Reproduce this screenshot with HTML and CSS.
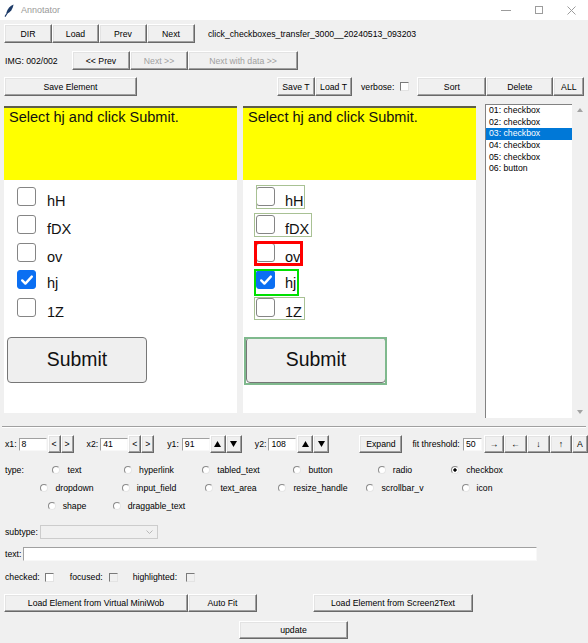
FILE: index.html
```html
<!DOCTYPE html>
<html>
<head>
<meta charset="utf-8">
<title>Annotator</title>
<link rel="stylesheet" href="styles.css">
</head>
<body>
<div class="window">
  <div class="titlebar">
    <svg class="app-icon" width="10" height="13" viewBox="0 0 10 13">
      <path d="M9.6 0.4 C6.2 1.6 3.4 4.6 2.4 8.6 L3.2 9.4 C6.6 8.2 8.8 4.8 9.6 0.4 Z" fill="#1d3b68"/>
      <path d="M5.5 5.5 L1 12.6" stroke="#1d3b68" stroke-width="1.1"/>
    </svg>
    <span class="title">Annotator</span>
    <div class="win-controls">
      <span class="wc"><svg width="10" height="1"><rect width="10" height="1" fill="#9c9c9c"/></svg></span>
      <span class="wc"><svg width="8" height="8"><rect x="0.5" y="0.5" width="7" height="7" fill="none" stroke="#9c9c9c"/></svg></span>
      <span class="wc"><svg width="9" height="9"><path d="M0.5 0.5 L8.5 8.5 M8.5 0.5 L0.5 8.5" stroke="#9c9c9c"/></svg></span>
    </div>
  </div>

  <div class="row r1">
    <div class="btn w48">DIR</div>
    <div class="btn w47">Load</div>
    <div class="btn w48">Prev</div>
    <div class="btn w48">Next</div>
    <span class="lbl filename">click_checkboxes_transfer_3000__20240513_093203</span>
  </div>

  <div class="row r2">
    <span class="lbl img-count">IMG: 002/002</span>
    <div class="btn w58">&lt;&lt; Prev</div>
    <div class="btn w58 disabled">Next &gt;&gt;</div>
    <div class="btn w110 disabled">Next with data &gt;&gt;</div>
  </div>

  <div class="row r3">
    <div class="btn save-el">Save Element</div>
    <div class="btn w38 save-t">Save T</div>
    <div class="btn w37">Load T</div>
    <span class="lbl verbose">verbose:</span>
    <span class="tkcb verbose-cb"></span>
    <div class="btn w69 sort">Sort</div>
    <div class="btn w67">Delete</div>
    <div class="btn w31">ALL</div>
  </div>

  <div class="panels">
    <div class="mw">
      <div class="query">Select hj and click Submit.</div>
      <div class="mw-list">
        <div class="mw-row"><span class="mw-cb"></span><span class="mw-label">hH</span></div>
        <div class="mw-row"><span class="mw-cb"></span><span class="mw-label">fDX</span></div>
        <div class="mw-row"><span class="mw-cb"></span><span class="mw-label">ov</span></div>
        <div class="mw-row"><span class="mw-cb checked"><svg width="16" height="16" viewBox="0 0 16 16"><path d="M3.2 8.4 L6.4 11.6 L12.8 4.6" fill="none" stroke="#fff" stroke-width="2.4" stroke-linecap="round" stroke-linejoin="round"/></svg></span><span class="mw-label">hj</span></div>
        <div class="mw-row"><span class="mw-cb"></span><span class="mw-label">1Z</span></div>
      </div>
      <div class="mw-submit">Submit</div>
    </div>

    <div class="mw mid">
      <div class="query">Select hj and click Submit.</div>
      <div class="mw-list">
        <div class="mw-row"><span class="mw-cb"></span><span class="mw-label">hH</span></div>
        <div class="mw-row"><span class="mw-cb"></span><span class="mw-label">fDX</span></div>
        <div class="mw-row"><span class="mw-cb"></span><span class="mw-label">ov</span></div>
        <div class="mw-row"><span class="mw-cb checked"><svg width="16" height="16" viewBox="0 0 16 16"><path d="M3.2 8.4 L6.4 11.6 L12.8 4.6" fill="none" stroke="#fff" stroke-width="2.4" stroke-linecap="round" stroke-linejoin="round"/></svg></span><span class="mw-label">hj</span></div>
        <div class="mw-row"><span class="mw-cb"></span><span class="mw-label">1Z</span></div>
      </div>
      <div class="mw-submit">Submit</div>
      <div class="ann ann-hh"></div>
      <div class="ann ann-fdx"></div>
      <div class="ann ann-ov"></div>
      <div class="ann ann-hj"></div>
      <div class="ann ann-1z"></div>
      <div class="ann ann-submit"></div>
    </div>

    <div class="listwrap">
      <div class="listbox">
        <div class="li">01: checkbox</div>
        <div class="li">02: checkbox</div>
        <div class="li sel">03: checkbox</div>
        <div class="li">04: checkbox</div>
        <div class="li">05: checkbox</div>
        <div class="li">06: button</div>
      </div>
      <div class="vscroll">
        <span class="arrow-up"></span>
        <span class="arrow-down"></span>
      </div>
    </div>
  </div>

  <div class="separator"></div>

  <div class="row xrow">
    <span class="lbl coord-lbl first">x1:</span>
    <span class="entry coord">8</span>
    <div class="btn small w13 after-entry">&lt;</div>
    <div class="btn small w13">&gt;</div>
    <span class="lbl coord-lbl">x2:</span>
    <span class="entry coord">41</span>
    <div class="btn small w13">&lt;</div>
    <div class="btn small w13">&gt;</div>
    <span class="lbl coord-lbl y1">y1:</span>
    <span class="entry coord">91</span>
    <div class="btn small w16"><svg width="7" height="6"><path d="M3.5 0 L7 6 L0 6 Z" fill="#000"/></svg></div>
    <div class="btn small w16"><svg width="7" height="6"><path d="M0 0 L7 0 L3.5 6 Z" fill="#000"/></svg></div>
    <span class="lbl coord-lbl">y2:</span>
    <span class="entry coord">108</span>
    <div class="btn small w16 after-entry"><svg width="7" height="6"><path d="M3.5 0 L7 6 L0 6 Z" fill="#000"/></svg></div>
    <div class="btn small w16"><svg width="7" height="6"><path d="M0 0 L7 0 L3.5 6 Z" fill="#000"/></svg></div>
    <div class="btn small expand">Expand</div>
    <span class="lbl fit-lbl">fit threshold:</span>
    <span class="entry fit">50</span>
    <div class="btn small w20 fit-first">→</div>
    <div class="btn small w23">←</div>
    <div class="btn small w23">↓</div>
    <div class="btn small w22">↑</div>
    <div class="btn small w16">A</div>
  </div>

  <div class="types">
    <span class="lbl type-lbl">type:</span>
    <span class="opt"><span class="radio"></span>text</span>
    <span class="opt"><span class="radio"></span>hyperlink</span>
    <span class="opt"><span class="radio"></span>tabled_text</span>
    <span class="opt"><span class="radio"></span>button</span>
    <span class="opt"><span class="radio"></span>radio</span>
    <span class="opt"><span class="radio on"></span>checkbox</span>

    <span></span>
    <span class="opt"><span class="radio"></span>dropdown</span>
    <span class="opt"><span class="radio"></span>input_field</span>
    <span class="opt"><span class="radio"></span>text_area</span>
    <span class="opt"><span class="radio"></span>resize_handle</span>
    <span class="opt"><span class="radio"></span>scrollbar_v</span>
    <span class="opt"><span class="radio"></span>icon</span>

    <span></span>
    <span class="opt"><span class="radio"></span>shape</span>
    <span class="opt"><span class="radio"></span>draggable_text</span>
  </div>

  <div class="row subrow">
    <span class="lbl sub-lbl">subtype:</span>
    <span class="combo"><svg width="7" height="4" viewBox="0 0 7 4"><path d="M0.5 0.5 L3.5 3.5 L6.5 0.5" fill="none" stroke="#b8b8b8"/></svg></span>
  </div>

  <div class="row textrow">
    <span class="lbl text-lbl">text:</span>
    <span class="entry text-entry"></span>
  </div>

  <div class="row flagrow">
    <span class="lbl flag-first">checked:</span>
    <span class="tkcb cb-checked"></span>
    <span class="lbl flag-focused">focused:</span>
    <span class="tkcb disabled cb-focused"></span>
    <span class="lbl flag-high">highlighted:</span>
    <span class="tkcb disabled cb-high"></span>
  </div>

  <div class="row loadrow">
    <div class="btn load-mw">Load Element from Virtual MiniWob</div>
    <div class="btn w69">Auto Fit</div>
    <div class="btn load-s2t">Load Element from Screen2Text</div>
  </div>

  <div class="row updaterow">
    <div class="btn update">update</div>
  </div>
</div>
</body>
</html>
```
FILE: styles.css
```css
* { box-sizing: border-box; }
html, body { margin: 0; padding: 0; }
body {
  background: #f0f0f0;
  font-family: "Liberation Sans", Arial, sans-serif;
  font-size: 8.7px;
  color: #000;
}
.window {
  width: 588px;
  height: 643px;
  overflow: hidden;
  background: #f0f0f0;
}

/* title bar */
.titlebar {
  height: 20px;
  background: #fff;
  display: flex;
  align-items: center;
}
.app-icon { margin-left: 4px; }
.title { margin-left: 7px; color: #9a9a9a; font-size: 9px; }
.win-controls { margin-left: auto; display: flex; height: 20px; }
.wc { width: 33px; display: flex; align-items: center; justify-content: center; }

/* generic rows */
.row { display: flex; align-items: center; }
.lbl { white-space: nowrap; }

.btn {
  display: flex;
  align-items: center;
  justify-content: center;
  height: 19px;
  background: #f0f0f0;
  border: 1px solid;
  border-color: #fff #696969 #696969 #fff;
  box-shadow: inset -1px -1px 0 #a0a0a0, inset 1px 1px 0 #e3e3e3;
  white-space: nowrap;
  overflow: hidden;
  flex: none;
}
.btn.small { height: 18px; }
.btn.disabled { color: #a0a0a0; }
.w13 { width: 13px; }
.w16 { width: 16px; }
.w20 { width: 20px; }
.w22 { width: 22px; }
.w23 { width: 23px; }
.w31 { width: 31px; }
.w37 { width: 37px; }
.w38 { width: 38px; }
.w47 { width: 47px; }
.w48 { width: 48px; }
.w58 { width: 58px; }
.w67 { width: 67px; }
.w69 { width: 69px; }
.w110 { width: 110px; }

.entry {
  display: flex;
  align-items: center;
  height: 13px;
  background: #fff;
  border: 1px solid;
  border-color: #a0a0a0 #f8f8f8 #f8f8f8 #a0a0a0;
  padding-left: 2px;
  flex: none;
}

.tkcb {
  width: 9px;
  height: 9px;
  background: #fff;
  border: 1px solid;
  border-color: #7a7a7a #e3e3e3 #e3e3e3 #7a7a7a;
  flex: none;
}
.tkcb.disabled { background: #f0f0f0; }

/* row 1 */
.r1 { margin-top: 4px; height: 19px; padding-left: 4px; }
.filename { margin-left: 13px; }

/* row 2 */
.r2 { margin-top: 8px; height: 19px; }
.img-count { width: 72px; padding-left: 5px; }

/* row 3 */
.r3 { margin-top: 7px; height: 19px; padding-left: 4px; }
.save-el { width: 133px; }
.save-t { margin-left: 140px; }
.verbose { margin-left: 9px; }
.verbose-cb { margin-left: 6px; }
.sort { margin-left: 8px; }

/* panels */
.panels {
  display: flex;
  align-items: flex-start;
  margin-top: 8px;
  padding-left: 4px;
  height: 314px;
}
.mw {
  width: 233px;
  height: 307px;
  margin-top: 2px;
  background: #fff;
  border-top: 2px solid #5e5e48;
  flex: none;
}
.mw.mid { margin-left: 6px; position: relative; }
.query {
  background: #ffff00;
  height: 72px;
  padding: 1px 5px;
  font-size: 14.56px;
  line-height: 1.15;
  color: #111;
}
.mw-list { padding-top: 7px; }
.mw-row {
  height: 27.75px;
  display: flex;
  align-items: baseline;
  padding-left: 13px;
}
.mw-cb {
  width: 19px;
  height: 19px;
  border: 1.5px solid #858585;
  border-radius: 3px;
  background: #fff;
  margin-right: 11px;
  flex: none;
  display: flex;
  align-items: center;
  justify-content: center;
}
.mw-cb.checked { background: #0b6ff2; border-color: #0b6ff2; }
.mw-label { font-size: 14.56px; color: #111; }
.mid .mw-cb { margin-right: 10px; }
.mw-submit {
  margin: 11px 0 0 3px;
  width: 140px;
  height: 46px;
  border: 1.5px solid #767676;
  border-radius: 4px;
  background: #efefef;
  font-size: 19.4px;
  color: #111;
  display: flex;
  align-items: center;
  justify-content: center;
}

/* annotation overlays */
.ann { position: absolute; border: 1.5px solid #a8c194; }
.ann-hh { left: 13px; top: 77px; width: 49px; height: 24px; }
.ann-fdx { left: 11px; top: 105px; width: 58px; height: 24px; }
.ann-ov { left: 11px; top: 133px; width: 49px; height: 25px; border: 3px solid #ff0000; }
.ann-hj { left: 11px; top: 161px; width: 45px; height: 27px; border: 2px solid #00e000; }
.ann-1z { left: 11px; top: 189px; width: 51px; height: 23px; }
.ann-submit { left: 1px; top: 229px; width: 143px; height: 48px; border: 2px solid #7fb98d; }

/* listbox */
.listwrap { display: flex; margin-left: 9px; height: 314px; }
.listbox {
  width: 87px;
  background: #fff;
  border-left: 1px solid #828282;
  border-top: 1px solid #828282;
}
.li {
  height: 11.7px;
  line-height: 11.7px;
  padding-left: 3px;
  white-space: nowrap;
}
.li.sel { background: #0078d7; color: #fff; }
.vscroll {
  width: 16px;
  background: #f0f0f0;
  display: flex;
  flex-direction: column;
  justify-content: space-between;
  align-items: center;
  padding: 4px 0 4px 0;
}
.arrow-up, .arrow-down { width: 0; height: 0; border-left: 3px solid transparent; border-right: 3px solid transparent; }
.arrow-up { border-bottom: 4px solid #a3a3a3; }
.arrow-down { border-top: 4px solid #a3a3a3; }

.separator {
  margin: 8px 2px 0 2px;
  height: 2px;
  border-top: 1px solid #a0a0a0;
  border-bottom: 1px solid #fff;
}

/* coordinate row */
.xrow { margin-top: 7px; height: 18px; }
.coord-lbl { width: 14px; margin-left: 13px; }
.coord-lbl.first { margin-left: 5px; }
.coord-lbl.y1 { width: 15px; }
.coord { width: 28px; }
.after-entry { margin-left: 1px; }
.expand { width: 43px; margin-left: 30px; }
.fit-lbl { width: 52px; margin-left: 10px; }
.fit { width: 19px; }
.fit-first { margin-left: 2px; }

/* type radios */
.types {
  display: grid;
  grid-template-columns: 26px repeat(6, 82px);
  grid-auto-rows: 18px;
  margin-top: 8px;
}
.type-lbl { padding-left: 5px; display: flex; align-items: center; }
.opt {
  display: flex;
  align-items: center;
  justify-content: center;
  gap: 7px;
  white-space: nowrap;
}
.radio {
  width: 8px;
  height: 8px;
  border-radius: 50%;
  border: 1px solid;
  border-color: #8a8a8a #e6e6e6 #e6e6e6 #8a8a8a;
  background: #fff;
  flex: none;
}
.radio.on { background: radial-gradient(circle, #000 0 1.4px, #fff 1.9px); }

/* subtype */
.subrow { margin-top: 10px; height: 14px; }
.sub-lbl { width: 40px; padding-left: 5px; }
.combo {
  width: 118px;
  height: 14px;
  border: 1px solid #cccccc;
  background: #f0f0f0;
  display: flex;
  align-items: center;
  justify-content: flex-end;
  padding-right: 4px;
}

/* text */
.textrow { margin-top: 8px; height: 14px; }
.text-lbl { width: 23px; padding-left: 5px; }
.text-entry { width: 514px; height: 14px; }

/* flags */
.flagrow { margin-top: 9px; height: 14px; }
.flag-first { margin-left: 5px; }
.cb-checked { margin-left: 5px; }
.flag-focused { margin-left: 16px; }
.cb-focused { margin-left: 6px; }
.flag-high { margin-left: 15px; }
.cb-high { margin-left: 9px; }

/* load row */
.loadrow { margin-top: 10px; height: 18px; padding-left: 4px; }
.loadrow .btn { height: 18px; }
.load-mw { width: 184px; }
.load-s2t { width: 160px; margin-left: 56px; }

.updaterow { margin-top: 9px; height: 18px; }
.update { width: 109px; height: 18px; margin-left: 239px; }
```
